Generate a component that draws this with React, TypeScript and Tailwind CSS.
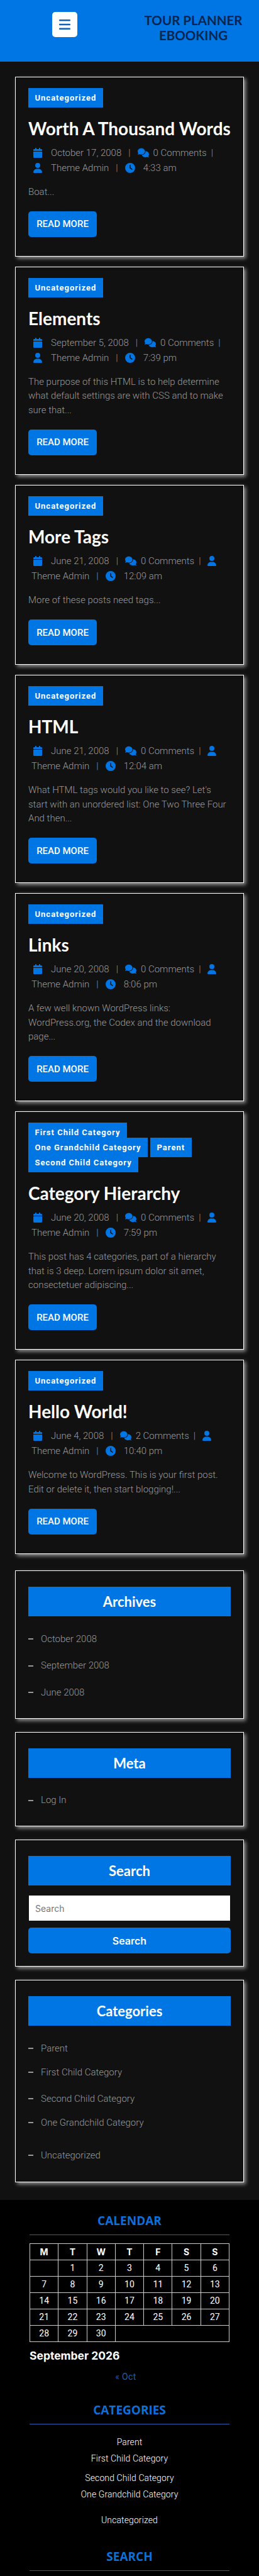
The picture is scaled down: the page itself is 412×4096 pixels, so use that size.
import type { ReactNode } from 'react';
import { FaCalendar, FaClock, FaComments, FaUser } from 'react-icons/fa6';

const heading = "font-['Lato','Open_Sans',sans-serif]";

type Post = {
  title: string;
  cats: string[];
  date: string;
  comments: string;
  time: string;
  text: string;
  wrapUser?: boolean;
};

const posts: Post[] = [
  { title: 'Worth A Thousand Words', cats: ['Uncategorized'], date: 'October 17, 2008', comments: '0 Comments', time: '4:33 am', text: 'Boat...' },
  { title: 'Elements', cats: ['Uncategorized'], date: 'September 5, 2008', comments: '0 Comments', time: '7:39 pm', text: 'The purpose of this HTML is to help determine what default settings are with CSS and to make sure that...' },
  { title: 'More Tags', cats: ['Uncategorized'], date: 'June 21, 2008', comments: '0 Comments', time: '12:09 am', text: 'More of these posts need tags...', wrapUser: true },
  { title: 'HTML', cats: ['Uncategorized'], date: 'June 21, 2008', comments: '0 Comments', time: '12:04 am', text: "What HTML tags would you like to see? Let's start with an unordered list: One Two Three Four And then...", wrapUser: true },
  { title: 'Links', cats: ['Uncategorized'], date: 'June 20, 2008', comments: '0 Comments', time: '8:06 pm', text: 'A few well known WordPress links: WordPress.org, the Codex and the download page...', wrapUser: true },
  { title: 'Category Hierarchy', cats: ['First Child Category', 'One Grandchild Category', 'Parent', 'Second Child Category'], date: 'June 20, 2008', comments: '0 Comments', time: '7:59 pm', text: 'This post has 4 categories, part of a hierarchy that is 3 deep. Lorem ipsum dolor sit amet, consectetuer adipiscing...', wrapUser: true },
  { title: 'Hello World!', cats: ['Uncategorized'], date: 'June 4, 2008', comments: '2 Comments', time: '10:40 pm', text: 'Welcome to WordPress. This is your first post. Edit or delete it, then start blogging!...', wrapUser: true },
];

function Card({ className, children }: { className: string; children: ReactNode }) {
  return (
    <div className={`border border-white bg-[#111111] shadow-[3px_3px_6px_rgba(255,255,255,0.55)] ${className}`}>
      {children}
    </div>
  );
}

function PostCard({ post }: { post: Post }) {
  return (
    <Card className="px-5 pt-[17px] pb-[30px]">
      <div className="flex flex-wrap gap-x-1 pb-[7px]">
        {post.cats.map((c) => (
          <span key={c} className="h-[31px] -mb-[7px] px-[10.5px] bg-[#0075e4] text-white text-[13px] leading-[31px] font-bold tracking-[1px]">
            {c}
          </span>
        ))}
      </div>
      <h2 className={`${heading} mt-4 text-[28px] leading-[34px] font-bold text-white`}>{post.title}</h2>
      <div className="mt-[10px] ml-[5px] text-[15px] leading-[24px] font-light text-[#999999]">
        <div className="flex items-center h-6">
          <FaCalendar className="ml-[3px] mr-[14px] w-[14px] h-[16px] text-[#0075e4]" />
          <span>{post.date}</span>
          <span className="mx-[11px]">|</span>
          <FaComments className="w-[18px] h-[16px] text-[#0075e4]" />
          <span className="ml-[7px]">{post.comments}</span>
          <span className="ml-[7px]">|</span>
          {post.wrapUser && <FaUser className="ml-[11px] w-[14px] h-[16px] text-[#0075e4]" />}
        </div>
        <div className="flex items-center h-6">
          {!post.wrapUser && <FaUser className="ml-[3px] mr-[14px] w-[14px] h-[16px] text-[#0075e4]" />}
          <span>Theme Admin</span>
          <span className="mx-[11px]">|</span>
          <FaClock className="w-[16px] h-[16px] text-[#0075e4]" />
          <span className="ml-[13px]">{post.time}</span>
        </div>
      </div>
      <p className="mt-[14.8px] text-[15px] leading-[22.4px] font-light text-[#999999]">{post.text}</p>
      <a className="mt-5 w-[109px] h-[41px] flex items-center justify-center rounded-[5px] bg-[#0075e4] text-white text-[15px] font-medium">READ MORE</a>
    </Card>
  );
}

function WidgetTitle({ children }: { children: ReactNode }) {
  return (
    <h3 className={`${heading} h-[47px] flex items-center justify-center bg-[#0075e4] text-white text-[22px] font-bold`}>{children}</h3>
  );
}

function DashItem({ label, className }: { label: string; className?: string }) {
  return (
    <li className={`h-[21px] flex items-center text-[15px] font-light text-[#999999] ${className ?? ''}`}>
      <span className="w-2 h-[2px] bg-[#999999] mr-3" />
      {label}
    </li>
  );
}

const weeks = [
  ['', '1', '2', '3', '4', '5', '6'],
  ['7', '8', '9', '10', '11', '12', '13'],
  ['14', '15', '16', '17', '18', '19', '20'],
  ['21', '22', '23', '24', '25', '26', '27'],
];

function FooterTitle({ children }: { children: ReactNode }) {
  return (
    <div className="border-b border-[#2a5ea8] pb-[10px] text-center font-['Open_Sans',sans-serif] text-[19px] leading-[24px] font-bold text-[#0f6fd8] uppercase">
      {children}
    </div>
  );
}

export default function App() {
  return (
    <div className="h-[4096px] overflow-hidden bg-[#111111] font-['Roboto',sans-serif]">
      <header className="h-[98px] bg-[#0075e4] flex">
        <div className="w-[206px] pl-[83px] pt-[19px]">
          <button className="w-10 h-10 rounded-[5px] bg-white flex items-center justify-center">
            <svg viewBox="0 0 18 16" className="w-[18px] h-4 fill-[#0f62b8]">
              <rect y="0" width="18" height="2.6" rx="1" />
              <rect y="6.7" width="18" height="2.6" rx="1" />
              <rect y="13.4" width="18" height="2.6" rx="1" />
            </svg>
          </button>
        </div>
        <div className={`${heading} flex-1 pt-5 pr-[3px] text-center text-[20.5px] leading-[24px] font-bold text-[#04254f]`}>
          TOUR PLANNER<br />EBOOKING
        </div>
      </header>

      <main className="px-6 pt-6 flex flex-col gap-4">
        {posts.map((p) => <PostCard key={p.title} post={p} />)}
      </main>

      <aside className="px-6 mt-[26px] flex flex-col gap-[21px]">
        <Card className="px-5 pt-[25px] pb-[30px]">
          <WidgetTitle>Archives</WidgetTitle>
          <ul className="mt-[25.5px] flex flex-col gap-[21.5px]">
            <DashItem label="October 2008" />
            <DashItem label="September 2008" />
            <DashItem label="June 2008" />
          </ul>
        </Card>
        <Card className="px-5 pt-[25px] pb-[30px]">
          <WidgetTitle>Meta</WidgetTitle>
          <ul className="mt-[25.5px]">
            <DashItem label="Log In" />
          </ul>
        </Card>
        <Card className="px-5 pt-[25px] pb-5">
          <WidgetTitle>Search</WidgetTitle>
          <div className="mt-4 mx-[1px] h-10 bg-white pl-[10px] flex items-center text-[14px] text-[#777777] font-['Inter',sans-serif]">Search</div>
          <div className="mt-[11px] h-[41px] rounded-[5px] bg-[#0075e4] flex items-center justify-center font-['Inter',sans-serif] font-semibold text-[16px] text-white">Search</div>
        </Card>
        <Card className="px-5 pt-[25px] pb-[31px]">
          <WidgetTitle>Categories</WidgetTitle>
          <ul className="mt-[25.5px]">
            <DashItem label="Parent" />
            <DashItem label="First Child Category" className="mt-[17px]" />
            <DashItem label="Second Child Category" className="mt-[21px]" />
            <DashItem label="One Grandchild Category" className="mt-[17px]" />
            <DashItem label="Uncategorized" className="mt-[31px]" />
          </ul>
        </Card>
      </aside>

      <footer className="mt-7 bg-black px-[47px] pt-[21px] h-[610px]">
        <FooterTitle>Calendar</FooterTitle>
        <table className="mt-[13px] w-[318px] border-collapse text-white text-[14px] text-center table-fixed">
          <thead>
            <tr>
              {['M', 'T', 'W', 'T', 'F', 'S', 'S'].map((d, i) => (
                <th key={i} className="h-[26px] border border-[#cccccc] font-bold p-0 font-['Inter',sans-serif]">{d}</th>
              ))}
            </tr>
          </thead>
          <tbody>
            {weeks.map((w) => (
              <tr key={w[1]}>
                {w.map((d, i) => <td key={i} className="h-[26px] border border-[#cccccc] p-0">{d}</td>)}
              </tr>
            ))}
            <tr>
              {['28', '29', '30'].map((d) => <td key={d} className="h-[26px] border border-[#cccccc] p-0">{d}</td>)}
              <td colSpan={4} className="border border-[#cccccc] p-0" />
            </tr>
          </tbody>
        </table>
        <div className="mt-[10px] text-[17.5px] leading-[24px] font-bold text-white font-['Inter',sans-serif]">September 2026</div>
        <div className="mt-[11.5px] pr-3 text-center text-[14px] leading-[20px] text-[#1c5fb0] tracking-[0.4px]">« Oct</div>
        <div className="mt-[31px]"><FooterTitle>Categories</FooterTitle></div>
        <ul className="mt-[17px] text-center text-[14px] leading-[22px] text-white font-light tracking-[0.1px]">
          <li>Parent</li>
          <li className="mt-1">First Child Category</li>
          <li className="mt-[9px]">Second Child Category</li>
          <li className="mt-1">One Grandchild Category</li>
          <li className="mt-[19px]">Uncategorized</li>
        </ul>
        <div className="mt-[35px]"><FooterTitle>Search</FooterTitle></div>
      </footer>
    </div>
  );
}
